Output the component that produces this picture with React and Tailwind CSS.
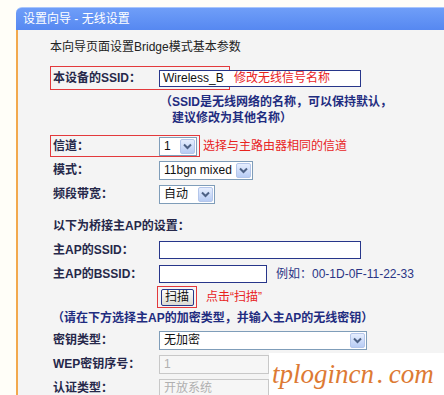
const Arrow = () => (
  <svg width="9" height="7" viewBox="0 0 9 7">
    <path d="M1 1.5 L4.5 5 L8 1.5" fill="none" stroke="#4d6185" strokeWidth="2" />
  </svg>
);

// XP 风格下拉框
const Select = ({ value, width }) => (
  <div className={`flex h-[19px] items-stretch border border-[#7f9db9] bg-white ${width}`}>
    <span className="flex-1 overflow-hidden whitespace-nowrap px-[4px] text-[12px] leading-[17px] text-[#111]">{value}</span>
    <span className="m-[1px] flex w-[15px] shrink-0 items-center justify-center rounded-[2px] border border-[#b4c6ea] bg-gradient-to-b from-[#e6eefe] to-[#b8ccf4]">
      <Arrow />
    </span>
  </div>
);

const Row = ({ label, children, h = 'h-[24px]' }) => (
  <div className={`flex items-center ${h}`}>
    <div className="w-[106px] shrink-0 font-semibold text-[#26284a]">{label}</div>
    {children}
  </div>
);

export default function App() {
  return (
    <div className="relative h-[395px] w-[444px] overflow-hidden bg-[#fffef8] text-[12px] font-['Liberation_Sans','Noto_Sans_CJK_SC',sans-serif]">
      <div className="h-[7px]" />
      {/* 标题栏 */}
      <div className="ml-[16px] h-[23px] rounded-tl-[6px] border-t border-[#a9c6fb] bg-gradient-to-b from-[#6f9ef8] to-[#5688f1] pl-[7px] leading-[22px] text-white">
        设置向导 - 无线设置
      </div>

      <div className="ml-[16px] h-[365px] border-l-2 border-[#f2a94e] bg-[#f4f4f4] pl-[35px] pt-[5px]">
        <div className="-ml-[3px] flex h-[24px] items-center text-[#222]">本向导页面设置Bridge模式基本参数</div>

        {/* 本设备SSID */}
        <div className="relative mt-[7px]">
          <div className="absolute -left-[3px] top-0 h-[24px] w-[180px] border border-[#e3393c]" />
          <Row label="本设备的SSID：">
            <div className="relative h-[17px] w-[202px] border border-[#27368a] bg-white pl-[3px] leading-[15px] text-[#111]">
              Wireless_B
              <span className="absolute left-[74px] top-0 text-[#e8231e]">修改无线信号名称</span>
            </div>
          </Row>
        </div>

        <div className="ml-[107px] mt-[4px] font-semibold leading-[16px] text-[#1f2c80]">
          <div>（SSID是无线网络的名称，可以保持默认，</div>
          <div className="pl-[12px]">建议修改为其他名称）</div>
        </div>

        {/* 信道 */}
        <div className="relative mt-[8px]">
          <div className="absolute -left-[3px] top-[1px] h-[22px] w-[150px] border border-[#e3393c]" />
          <Row label="信道：">
            <Select value="1" width="w-[38px]" />
            <span className="ml-[6px] text-[#e8231e]">选择与主路由器相同的信道</span>
          </Row>
        </div>

        <Row label="模式：">
          <Select value="11bgn mixed" width="w-[94px]" />
        </Row>
        <Row label="频段带宽：">
          <Select value="自动" width="w-[56px]" />
        </Row>

        <div className="mt-[8px] flex h-[24px] items-center font-semibold text-[#26284a]">以下为桥接主AP的设置：</div>
        <Row label="主AP的SSID：">
          <div className="h-[18px] w-[202px] border border-[#27368a] bg-white" />
        </Row>
        <Row label="主AP的BSSID：">
          <div className="h-[18px] w-[108px] border border-[#27368a] bg-white" />
          <span className="ml-[9px] text-[#2a3585]">例如：00-1D-0F-11-22-33</span>
        </Row>

        {/* 扫描 */}
        <div className="relative flex h-[22px] items-center pl-[104px]">
          <div className="flex h-[22px] w-[40px] items-center justify-center border border-[#e3393c]">
            <button className="h-[17px] w-[33px] rounded-[2px] border border-[#27368a] bg-gradient-to-b from-[#fdfdfd] to-[#dcdcd4] text-[12px] leading-[14px] text-[#111]">
              扫描
            </button>
          </div>
          <span className="ml-[9px] text-[#e8231e]">点击“扫描”</span>
        </div>

        <div className="-ml-[1px] flex h-[20px] items-center font-semibold text-[#1f2c80]">（请在下方选择主AP的加密类型，并输入主AP的无线密钥）</div>

        <Row label="密钥类型：">
          <Select value="无加密" width="w-[208px]" />
        </Row>
        <Row label="WEP密钥序号：">
          <div className="h-[19px] w-[110px] border border-[#c8c8c8] bg-[#f6f6f6] pl-[4px] leading-[17px] text-[#b0b0b0]">1</div>
        </Row>
        <Row label="认证类型：">
          <div className="h-[19px] w-[110px] border border-[#c8c8c8] bg-[#f6f6f6] pl-[4px] leading-[17px] text-[#b0b0b0]">开放系统</div>
        </Row>
      </div>

      {/* 水印 */}
      <div className="absolute left-[269px] top-[353px] flex h-[42px] w-[175px] items-center whitespace-nowrap bg-white pl-[3px] font-['Liberation_Serif',serif] text-[27px] italic leading-none text-[#dd7a34]">
        tplogincn<span className="ml-[3px]">.</span><span className="ml-[5px]">com</span>
      </div>
    </div>
  );
}
